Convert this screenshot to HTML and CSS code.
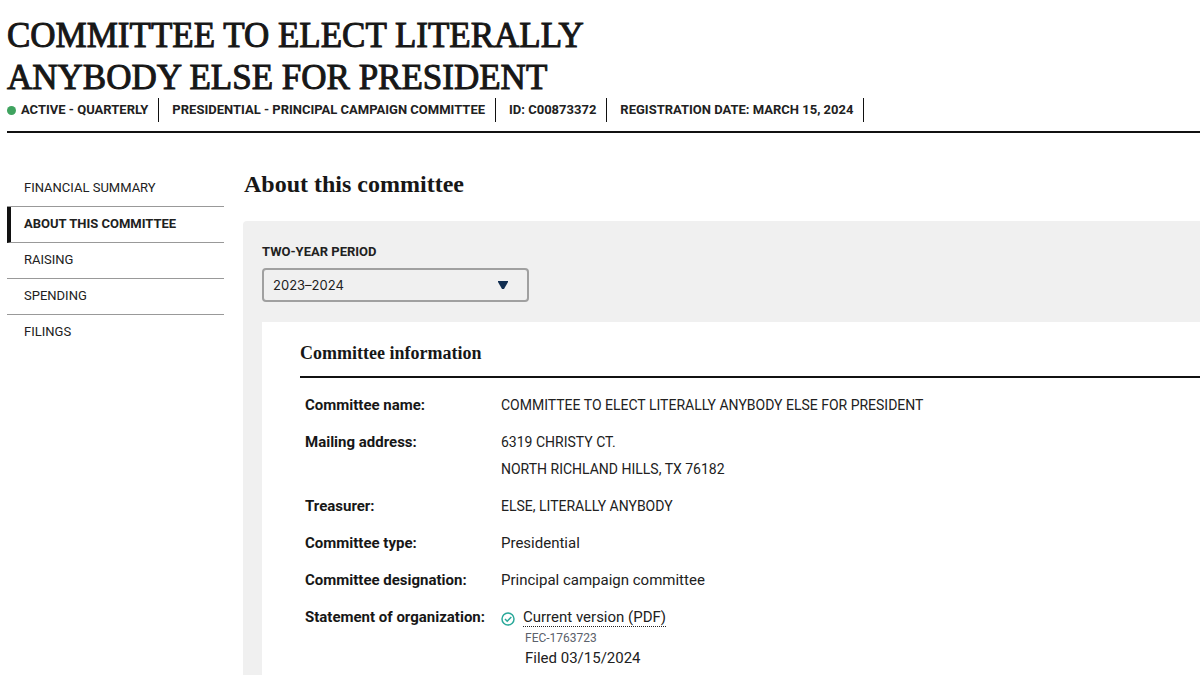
FILE: index.html
```html
<!DOCTYPE html>
<html lang="en">
<head>
  <meta charset="UTF-8">
  <title>Committee to Elect Literally Anybody Else for President</title>
  <link rel="stylesheet" href="styles.css">
</head>
<body>
  <header class="entity-header">
    <h1 class="entity-name">COMMITTEE TO ELECT LITERALLY<br>ANYBODY ELSE FOR PRESIDENT</h1>
    <ul class="entity-tags">
      <li><span class="status-dot"></span>ACTIVE - QUARTERLY</li>
      <li>PRESIDENTIAL - PRINCIPAL CAMPAIGN COMMITTEE</li>
      <li>ID: C00873372</li>
      <li>REGISTRATION DATE: MARCH 15, 2024</li>
    </ul>
  </header>

  <div class="layout">
    <nav class="side-nav">
      <a href="#summary">FINANCIAL SUMMARY</a>
      <a href="#about" class="current">ABOUT THIS COMMITTEE</a>
      <a href="#raising">RAISING</a>
      <a href="#spending">SPENDING</a>
      <a href="#filings">FILINGS</a>
    </nav>

    <main class="content" id="about">
      <h2 class="section-title">About this committee</h2>

      <div class="panel">
        <label class="period-label" for="period">TWO-YEAR PERIOD</label>
        <div class="period-select">
          <select id="period">
            <option>2023–2024</option>
          </select>
          <svg class="arrow" viewBox="0 0 12 10" aria-hidden="true"><path d="M1 1h10v1L7 9H5L1 2z"/></svg>
        </div>

        <section class="card">
          <h3 class="card-title">Committee information</h3>
          <table class="info">
            <tr>
              <th scope="row">Committee name:</th>
              <td class="caps">COMMITTEE TO ELECT LITERALLY ANYBODY ELSE FOR PRESIDENT</td>
            </tr>
            <tr>
              <th scope="row">Mailing address:</th>
              <td class="caps">6319 CHRISTY CT.<br>NORTH RICHLAND HILLS, TX 76182</td>
            </tr>
            <tr>
              <th scope="row">Treasurer:</th>
              <td class="caps">ELSE, LITERALLY ANYBODY</td>
            </tr>
            <tr>
              <th scope="row">Committee type:</th>
              <td>Presidential</td>
            </tr>
            <tr>
              <th scope="row">Committee designation:</th>
              <td>Principal campaign committee</td>
            </tr>
            <tr>
              <th scope="row">Statement of organization:</th>
              <td>
                <div class="statement">
                  <svg class="check" viewBox="0 0 14 14" aria-hidden="true">
                    <circle cx="7" cy="7" r="6"/>
                    <path d="M4 7l2.200 2.200L10.300 5"/>
                  </svg>
                  <div>
                    <a class="pdf-link" href="#filing">Current version (PDF)</a>
                    <div class="filing-id">FEC-1763723</div>
                    <div class="filed">Filed 03/15/2024</div>
                  </div>
                </div>
              </td>
            </tr>
          </table>
        </section>
      </div>
    </main>
  </div>
</body>
</html>
```
FILE: styles.css
```css
* {
  box-sizing: border-box;
}

body {
  margin: 0;
  padding: 15px 0 0 7px;
  background-color: #fff;
  color: #212121;
  font-family: Roboto, "Liberation Sans", sans-serif;
  font-size: 15px;
}

h1, h2, h3 {
  margin: 0;
  color: #171717;
  font-family: "Liberation Serif", serif;
  font-weight: bold;
}

.entity-header {
  border-bottom: 2px solid #111;
  padding-bottom: 9px;
}

.entity-name {
  font-size: 35px;
  font-weight: normal;
  line-height: 42px;
  -webkit-text-stroke: 1px #171717;
}

.entity-tags {
  display: flex;
  margin: -1px 0 0;
  padding: 0;
  list-style: none;
  font-size: 13px;
  font-weight: bold;
  line-height: 24px;
}

.entity-tags li {
  display: flex;
  align-items: center;
  padding-right: 10px;
  margin-right: 13px;
  border-right: 1px solid #111;
}

.status-dot {
  width: 9px;
  height: 9px;
  margin-right: 5px;
  border-radius: 50%;
  background-color: #3fa35f;
}

.layout {
  display: grid;
  grid-template-columns: 217px 1fr;
  gap: 19px;
  padding-top: 37px;
}

.side-nav {
  padding-top: 1px;
  font-size: 13px;
}

.side-nav a {
  display: block;
  height: 36px;
  padding-left: 17px;
  border-bottom: 1px solid #999;
  color: #212121;
  line-height: 34px;
  text-decoration: none;
}

.side-nav a:last-child {
  border-bottom: 0;
}

.side-nav .current {
  padding-left: 13px;
  border-left: 4px solid #111;
  font-weight: bold;
}

.section-title {
  padding-left: 1px;
  font-size: 24px;
  line-height: 28px;
}

.panel {
  margin-top: 23px;
  padding: 21px 0 0 19px;
  border-radius: 4px 0 0 0;
  background-color: #f0f0f0;
}

.period-label {
  display: block;
  font-size: 13px;
  font-weight: bold;
  line-height: 20px;
}

.period-select {
  position: relative;
  width: 267px;
  margin-top: 6px;
}

.period-select select {
  display: block;
  width: 100%;
  height: 34px;
  padding: 0 9px;
  appearance: none;
  border: 2px solid #a0a0a0;
  border-radius: 4px;
  background-color: transparent;
  color: #212121;
  font-family: Inter, sans-serif;
  font-size: 13px;
}

.arrow {
  position: absolute;
  top: 12px;
  right: 20px;
  width: 12px;
  height: 10px;
  fill: #112e51;
  pointer-events: none;
}

.card {
  margin-top: 20px;
  padding: 18px 0 20px 38px;
  background-color: #fff;
}

.card-title {
  padding-bottom: 10px;
  border-bottom: 2px solid #111;
  font-size: 18px;
  line-height: 26px;
}

.info {
  margin-top: 9px;
  border-collapse: collapse;
  line-height: 27px;
}

.info th,
.info td {
  padding: 5px 0;
  text-align: left;
  vertical-align: top;
}

.info th {
  width: 201px;
  padding-left: 5px;
  color: #171717;
  white-space: nowrap;
}

.info .caps {
  font-size: 14px;
}

.statement {
  display: flex;
  gap: 8px;
}

.check {
  width: 14px;
  height: 14px;
  margin-top: 8px;
  fill: none;
  stroke: #2aa99a;
  stroke-width: 1.5;
}

.pdf-link {
  display: inline-block;
  border-bottom: 1px dotted #212121;
  color: #212121;
  line-height: 18px;
  text-decoration: none;
}

.filing-id {
  padding-left: 2px;
  color: #5b616b;
  font-size: 12px;
  line-height: 14px;
}

.filed {
  padding-left: 2px;
}
```
